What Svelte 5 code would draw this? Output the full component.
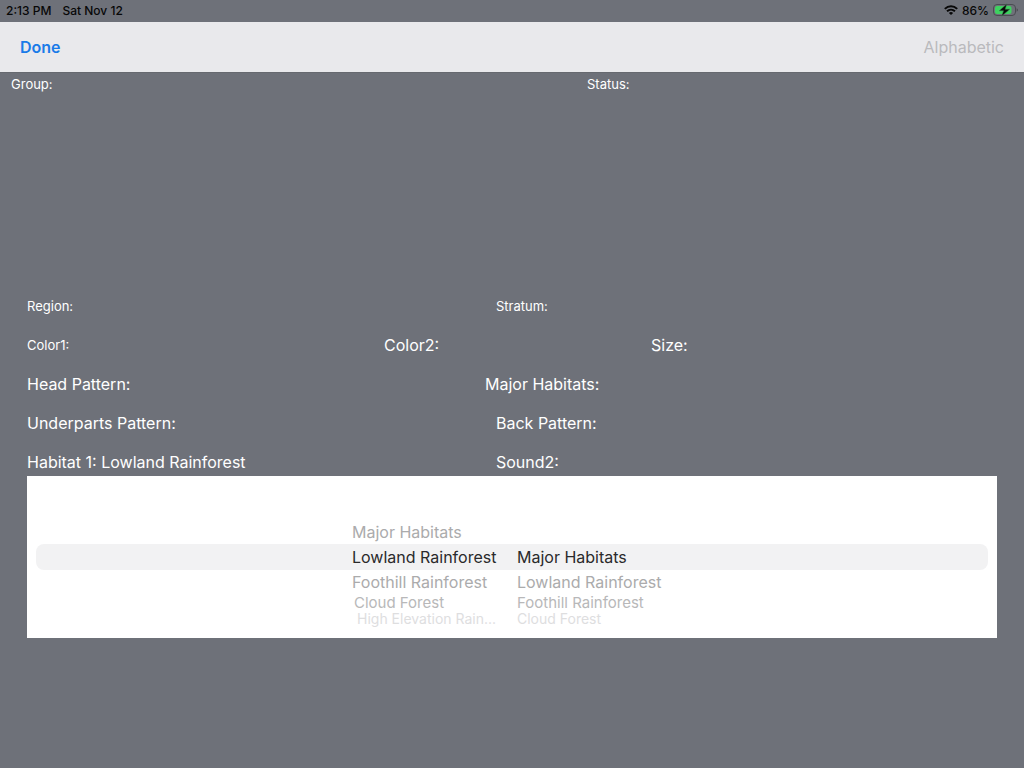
<script lang="ts">
  const habitats = [
    'Major Habitats',
    'Lowland Rainforest',
    'Foothill Rainforest',
    'Cloud Forest',
    'High Elevation Rain...',
  ];
  const offsets = [-3, -2, -1, 0, 1, 2, 3];

  let selected = $state([1, 0]);
</script>

<div class="screen">
  <div class="status-bar">
    <span>2:13 PM</span>
    <span>Sat Nov 12</span>
    <div class="indicators">
      <svg width="14" height="10" viewBox="0 0 14 10" aria-hidden="true">
        <path d="M.8 3.9C4.5.3 9.5.3 13.2 3.9" fill="none" stroke="#080808" stroke-width="2" />
        <path d="M3 6.3C5.3 4.1 8.7 4.1 11 6.3" fill="none" stroke="#080808" stroke-width="1.9" />
        <path d="M7 10 4.9 7.9Q7 6.2 9.1 7.9Z" fill="#080808" />
      </svg>
      <span>86%</span>
      <svg width="25" height="14" viewBox="0 0 25 14" aria-hidden="true">
        <rect x=".5" y="1.5" width="22" height="11" rx="3.5" fill="none" stroke="#4a4c51" />
        <rect x="2" y="3" width="16.5" height="8" rx="2" fill="#3ed160" />
        <path d="M23.6 5.2Q25 5.8 25 7T23.6 8.8Z" fill="#4a4c51" />
        <path
          d="M13.8.9 6.2 7.8H10.5L8.8 13.1 16.8 6.2H12.2Z"
          fill="#080808"
          stroke="#3d7b50"
          stroke-width=".5"
        />
      </svg>
    </div>
  </div>

  <header class="toolbar">
    <button class="done">Done</button>
    <button class="sort" disabled>Alphabetic</button>
  </header>

  <main>
    <div class="row top small">
      <span>Group:</span>
      <span>Status:</span>
    </div>

    <div class="filters">
      <div class="row halves small">
        <span>Region:</span>
        <span>Stratum:</span>
      </div>
      <div class="row thirds">
        <span class="small">Color1:</span>
        <span>Color2:</span>
        <span>Size:</span>
      </div>
      <div class="row wide">
        <span>Head Pattern:</span>
        <span>Major Habitats:</span>
      </div>
      <div class="row halves">
        <span>Underparts Pattern:</span>
        <span>Back Pattern:</span>
      </div>
      <div class="row halves">
        <span>Habitat 1: {habitats[selected[0]]}</span>
        <span>Sound2:</span>
      </div>
    </div>

    <div class="picker">
      <div class="highlight"></div>
      {#each selected as current, column}
        <div class="wheel" role="listbox" aria-label="Habitat {column + 1}">
          {#each offsets as offset}
            {@const name = habitats[current + offset]}
            {#if name}
              <button
                class="option level-{Math.abs(offset)}"
                role="option"
                aria-selected={offset === 0}
                onclick={() => (selected[column] = current + offset)}
              >{name}</button>
            {:else}
              <div class="level-{Math.abs(offset)}"></div>
            {/if}
          {/each}
        </div>
      {/each}
    </div>
  </main>
</div>

<style>
  :global(body) {
    background: #6e7179;
  }

  .screen {
    min-height: 100vh;
    background: #6e7179;
    color: #fff;
    font-family: Inter, 'Liberation Sans', sans-serif;
    font-size: 16px;
  }

  button {
    padding: 0;
    border: 0;
    background: none;
    font: inherit;
    text-align: left;
    cursor: pointer;
  }

  .status-bar {
    display: flex;
    align-items: center;
    gap: 11px;
    height: 20px;
    padding: 0 6px 2px;
    color: #080808;
    font-size: 12px;
    font-weight: 500;
  }

  .indicators {
    display: flex;
    align-items: center;
    gap: 4px;
    margin-left: auto;
  }

  .toolbar {
    display: flex;
    align-items: center;
    justify-content: space-between;
    height: 50px;
    padding: 0 20px;
    background: #e9e9ec;
  }

  .done {
    color: #1a7be8;
    font-weight: 600;
  }

  .sort {
    color: #bababd;
    cursor: default;
  }

  .row {
    display: grid;
    align-items: center;
    line-height: 28px;
  }

  .small {
    font-size: 13px;
  }

  .top {
    grid-template-columns: 576fr 437fr;
    height: 22px;
    margin-left: 11px;
    border-top: 1px solid #66696f;
    line-height: 21px;
  }

  .top {
    margin-left: 0;
    padding-left: 11px;
  }

  .filters {
    display: grid;
    gap: 11px;
    margin: 197px 27px 0;
  }

  .halves {
    grid-template-columns: 469fr 501fr;
  }

  .thirds {
    grid-template-columns: 357fr 267fr 346fr;
  }

  .wide {
    grid-template-columns: 458fr 512fr;
  }

  .picker {
    position: relative;
    display: flex;
    justify-content: center;
    gap: 10px;
    margin: 0 27px;
    padding: 12px 0;
    background: #fff;
  }

  .highlight {
    position: absolute;
    top: 68px;
    left: 9px;
    right: 9px;
    height: 26px;
    border-radius: 8px;
    background: #f2f2f3;
  }

  .wheel {
    position: relative;
    width: 155px;
  }

  .option {
    display: block;
    width: 100%;
    white-space: nowrap;
  }

  .level-0 {
    height: 26px;
    color: #2a2a2b;
    line-height: 26px;
  }

  .level-1 {
    height: 24px;
    color: #ababac;
    line-height: 24px;
  }

  .level-2 {
    height: 18px;
    color: #b8b8b9;
    font-size: 15px;
    line-height: 18px;
  }

  .level-3 {
    height: 14px;
    color: #dededf;
    font-size: 14px;
    line-height: 14px;
  }

  .wheel:nth-child(2) .level-2 {
    padding-left: 2px;
  }

  .wheel:nth-child(2) .level-3 {
    padding-left: 5px;
  }
</style>
